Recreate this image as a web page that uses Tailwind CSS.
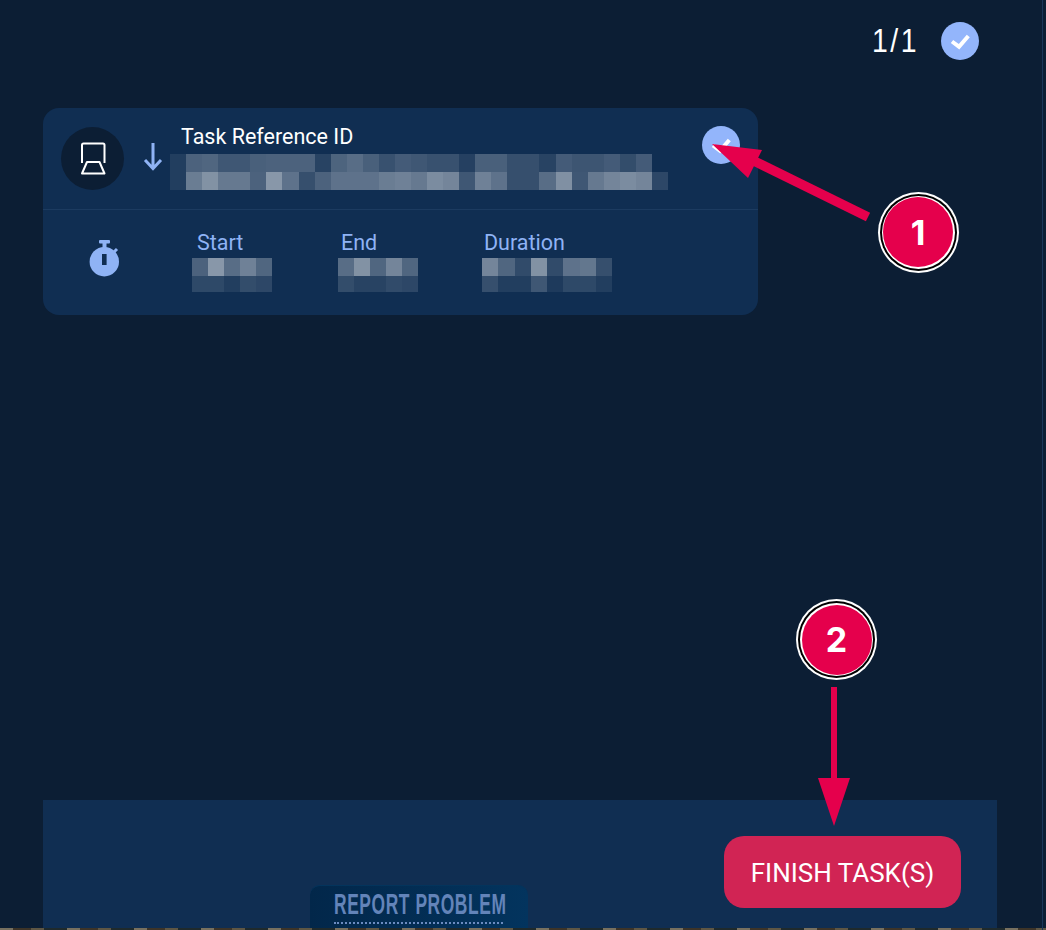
<!DOCTYPE html>
<html lang="en">
<head>
  <meta charset="UTF-8" />
  <title>Finish Task</title>
  <script src="https://cdn.jsdelivr.net/npm/@tailwindcss/browser@4"></script>
</head>
<body class="bg-[#0c1e34] font-['Roboto',sans-serif] overflow-hidden">
<div class="relative w-[1046px] h-[930px] flex flex-col overflow-hidden">

  <!-- right edge line -->
  <div class="absolute right-[3px] top-0 bottom-0 w-px bg-[#1b3659]"></div>

  <!-- counter -->
  <div class="flex justify-end items-center h-[82px] pr-[67px] gap-[26px]">
    <div class="w-[43px] h-[40px]">
      <span class="block origin-left scale-x-[0.86] font-['Liberation_Sans_Narrow','Liberation_Sans',sans-serif] text-[33px] leading-[40px] tracking-[3px] text-white whitespace-nowrap">1/1</span>
    </div>
    <div class="w-[38px] h-[38px] rounded-full bg-[#93b5fb] flex items-center justify-center">
      <svg width="38" height="38" viewBox="0 0 38 38" fill="none"><path d="M11 19.500l7 5.200 9.300-10.700" stroke="#fff" stroke-width="4"/></svg>
    </div>
  </div>

  <!-- task card -->
  <div class="ml-[43px] mt-[26px] w-[715px] h-[207px] rounded-[16px] bg-[#102e52]">
    <div class="relative flex h-[102px] pl-[18px] pt-[19px] border-b border-[#1c3b60]">
      <div class="w-[63px] h-[63px] rounded-full bg-[#0c1e34] flex items-center justify-center">
        <svg width="63" height="63" viewBox="0 0 63 63" fill="none" stroke="#fff" stroke-width="2" stroke-linejoin="round">
          <path d="M21 36V18a1.500 1.500 0 0 1 1.500-1.500h19.500a1.500 1.500 0 0 1 1.500 1.500v18"/>
          <path d="M26 35h12.500l5 11.500h-22.500z"/>
        </svg>
      </div>
      <div class="w-[46px] flex justify-center pt-[15px] pl-[11px]">
        <svg width="22" height="30" viewBox="0 0 22 30" fill="none" stroke="#8fb3f5" stroke-width="3"><path d="M11 1v26M3 18l8 8.500 8-8.500"/></svg>
      </div>
      <div class="-mt-[3px]">
        <div class="h-[30px] pl-[11px] text-[21.500px] leading-[26px] text-white">Task Reference ID</div>
        <div data-pixels=".08,.25,.27,.2,.2,.24,.25,.25,.25,.1,.26,.3,.24,.17,.22,.2,.17,.17,.09,.24,.24,.16,.16,.1,.22,.19,.19,.22,.15,.22" class="flex w-[482px] h-[18px]"></div>
        <div data-pixels=".08,.38,.48,.36,.36,.25,.5,.33,.16,.25,.33,.33,.33,.38,.4,.36,.45,.42,.2,.4,.33,.16,.16,.3,.47,.2,.36,.42,.45,.42,.12" class="flex w-[498px] h-[18px]"></div>
      </div>
      <div class="absolute left-[659px] top-[18px] w-[38px] h-[38px] rounded-full bg-[#93b5fb] flex items-center justify-center">
        <svg width="38" height="38" viewBox="0 0 38 38" fill="none"><path d="M11 19.500l7 5.200 9.300-10.700" stroke="#fff" stroke-width="4"/></svg>
      </div>
    </div>

    <div class="flex pl-[42px] pt-[21px]">
      <svg class="mt-[8px]" width="38" height="38" viewBox="0 0 38 38" fill="#8fb3f5">
        <rect x="14" y="1" width="11" height="3.500" rx="1"/>
        <rect x="17.500" y="4" width="4" height="6"/>
        <path d="M27 15l5-5" stroke="#8fb3f5" stroke-width="3"/>
        <circle cx="19.300" cy="22.700" r="14.700"/>
        <rect x="17" y="15" width="4.600" height="11" fill="#102e52"/>
      </svg>
      <div class="flex ml-[69px]">
        <div class="w-[80px]">
          <div class="h-[27px] pl-[5px] text-[21.500px] leading-[24px] text-[#8fb3f5]">Start</div>
          <div data-pixels=".25,.5,.3,.4,.27" class="flex h-[18px]"></div>
          <div data-pixels=".13,.13,.08,.15,.12" class="flex h-[16px]"></div>
        </div>
        <div class="w-[80px] ml-[66px]">
          <div class="h-[27px] pl-[3px] text-[21.500px] leading-[24px] text-[#8fb3f5]">End</div>
          <div data-pixels=".3,.48,.27,.42,.27" class="flex h-[18px]"></div>
          <div data-pixels=".15,.1,.1,.14,.12" class="flex h-[16px]"></div>
        </div>
        <div class="w-[130px] ml-[64px]">
          <div class="h-[27px] pl-[2px] text-[21.500px] leading-[24px] text-[#8fb3f5]">Duration</div>
          <div data-pixels=".42,.27,.14,.48,.14,.33,.35,.16" class="flex h-[18px]"></div>
          <div data-pixels=".16,.08,.08,.2,.06,.13,.13,.08" class="flex h-[16px]"></div>
        </div>
      </div>
    </div>
  </div>

  <!-- bottom panel -->
  <div class="mt-auto ml-[43px] w-[954px] h-[128px] bg-[#102e52] flex overflow-hidden">
    <div class="ml-[267px] mt-[85px] w-[218px] h-[60px] rounded-[10px] border-t border-[#03345c] bg-gradient-to-r from-[#02274a] to-[#03345e] px-[24px] pt-[3px]">
      <div class="w-[169px] h-[35px] border-b-2 border-dotted border-[#6b8bc0]">
        <span class="block origin-left scale-x-[0.58] font-bold font-['Liberation_Sans_Narrow','Liberation_Sans',sans-serif] text-[30px] leading-[30px] tracking-[1px] text-[#6384b9] whitespace-nowrap">REPORT PROBLEM</span>
      </div>
    </div>
    <button class="ml-auto mr-[36px] mt-[36px] w-[237px] h-[72px] pt-[3px] rounded-[20px] bg-[#d12454] text-[26px] text-white">FINISH TASK(S)</button>
  </div>
  <!-- photo peeking out under the panel -->
  <div class="h-[2px] bg-[repeating-linear-gradient(90deg,#77705f_0_13px,#3d3428_13px_31px,#5e5644_31px_44px,#1f2a2c_44px_67px)]"></div>

  <!-- annotations -->
  <svg class="absolute left-0 top-0 pointer-events-none" width="1046" height="930" fill="#e5004c">
    <path d="M868 217L752 160" stroke="#e5004c" stroke-width="9.500"/>
    <path d="M712 144L762 150L748 178z"/>
    <path d="M834 687V782" stroke="#e5004c" stroke-width="6"/>
    <path d="M818 778H850L834 826z"/>
  </svg>
  <div class="absolute left-[877.500px] top-[191.500px] w-[81px] h-[81px] rounded-full bg-white p-[2px]">
    <div class="w-full h-full rounded-full bg-black p-[2px]">
      <div class="w-full h-full rounded-full bg-white p-[1.500px]">
        <div class="w-full h-full rounded-full bg-[#e5004c] flex items-center justify-center font-['Inter',sans-serif] font-bold text-[34px] text-white">1</div>
      </div>
    </div>
  </div>
  <div class="absolute left-[796px] top-[599px] w-[81px] h-[81px] rounded-full bg-white p-[2px]">
    <div class="w-full h-full rounded-full bg-black p-[2px]">
      <div class="w-full h-full rounded-full bg-white p-[1.500px]">
        <div class="w-full h-full rounded-full bg-[#e5004c] flex items-center justify-center font-['Inter',sans-serif] font-bold text-[34px] text-white">2</div>
      </div>
    </div>
  </div>
</div>

<script>
  // blurred values: each cell is a white square with its own strength
  document.querySelectorAll("[data-pixels]").forEach(row => {
    row.dataset.pixels.split(",").forEach(alpha => {
      const cell = document.createElement("div");
      cell.className = "flex-1";
      cell.style.background = `rgba(255,255,255,${alpha})`;
      row.appendChild(cell);
    });
  });
</script>
</body>
</html>
